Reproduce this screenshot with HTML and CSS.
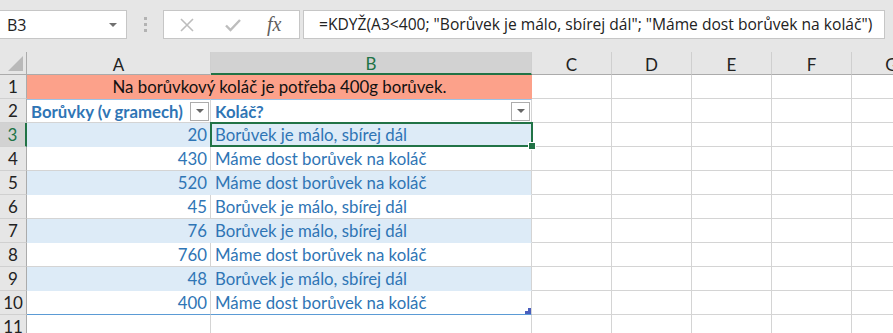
FILE: index.html
```html
<!DOCTYPE html>
<html lang="cs">
<head>
    <meta charset="UTF-8">
    <meta name="viewport" content="width=device-width, initial-scale=1.0">
    <title>Borůvky</title>
    <link rel="stylesheet" href="styles.css">
</head>
<body>
    <div class="lista">
        <div class="nazev">
            <span>B3</span>
            <svg class="sipka" width="10" height="6" viewBox="0 0 10 6"><path d="M1 1h8L5 5z" fill="#707070"/></svg>
        </div>
        <div class="uchyt"><i></i><i></i><i></i></div>
        <div class="tlacitka">
            <svg width="14" height="14" viewBox="0 0 14 14"><path d="M1 1L13 13M13 1L1 13" stroke="#bdbdbd" stroke-width="1.6" fill="none"/></svg>
            <svg width="16" height="14" viewBox="0 0 16 14"><path d="M1 7.5L5.5 12L15 2" stroke="#bdbdbd" stroke-width="2.4" fill="none"/></svg>
            <span class="fx">fx</span>
        </div>
        <div class="vzorec">=KDYŽ(A3&lt;400; "Borůvek je málo, sbírej dál"; "Máme dost borůvek na koláč")</div>
    </div>

    <div class="list">
        <div class="roh"><svg width="18" height="18" viewBox="0 0 18 18"><path d="M17 2V17H2z" fill="#b9b9b9"/></svg></div>
        <div class="hlavicka">A</div>
        <div class="hlavicka vybrano">B</div>
        <div class="hlavicka">C</div>
        <div class="hlavicka">D</div>
        <div class="hlavicka">E</div>
        <div class="hlavicka">F</div>
        <div class="hlavicka">G</div>

        <div class="radek">1</div>
        <div class="bunka nadpis"><span>Na borůvkový koláč je potřeba 400g borůvek.</span></div>
        <div class="bunka"></div><div class="bunka"></div><div class="bunka"></div><div class="bunka"></div><div class="bunka"></div>

        <div class="radek">2</div>
        <div class="bunka zahlavi">Borůvky (v gramech)<span class="filtr"></span></div>
        <div class="bunka zahlavi">Koláč?<span class="filtr"></span></div>
        <div class="bunka"></div><div class="bunka"></div><div class="bunka"></div><div class="bunka"></div><div class="bunka"></div>

        <div class="radek vybrano">3</div>
        <div class="bunka cislo pruh">20</div>
        <div class="bunka text pruh aktivni">Borůvek je málo, sbírej dál</div>
        <div class="bunka"></div><div class="bunka"></div><div class="bunka"></div><div class="bunka"></div><div class="bunka"></div>

        <div class="radek">4</div>
        <div class="bunka cislo">430</div>
        <div class="bunka text">Máme dost borůvek na koláč</div>
        <div class="bunka"></div><div class="bunka"></div><div class="bunka"></div><div class="bunka"></div><div class="bunka"></div>

        <div class="radek">5</div>
        <div class="bunka cislo pruh">520</div>
        <div class="bunka text pruh">Máme dost borůvek na koláč</div>
        <div class="bunka"></div><div class="bunka"></div><div class="bunka"></div><div class="bunka"></div><div class="bunka"></div>

        <div class="radek">6</div>
        <div class="bunka cislo">45</div>
        <div class="bunka text">Borůvek je málo, sbírej dál</div>
        <div class="bunka"></div><div class="bunka"></div><div class="bunka"></div><div class="bunka"></div><div class="bunka"></div>

        <div class="radek">7</div>
        <div class="bunka cislo pruh">76</div>
        <div class="bunka text pruh">Borůvek je málo, sbírej dál</div>
        <div class="bunka"></div><div class="bunka"></div><div class="bunka"></div><div class="bunka"></div><div class="bunka"></div>

        <div class="radek">8</div>
        <div class="bunka cislo">760</div>
        <div class="bunka text">Máme dost borůvek na koláč</div>
        <div class="bunka"></div><div class="bunka"></div><div class="bunka"></div><div class="bunka"></div><div class="bunka"></div>

        <div class="radek">9</div>
        <div class="bunka cislo pruh">48</div>
        <div class="bunka text pruh">Borůvek je málo, sbírej dál</div>
        <div class="bunka"></div><div class="bunka"></div><div class="bunka"></div><div class="bunka"></div><div class="bunka"></div>

        <div class="radek">10</div>
        <div class="bunka cislo konec">400</div>
        <div class="bunka text konec posledni">Máme dost borůvek na koláč</div>
        <div class="bunka"></div><div class="bunka"></div><div class="bunka"></div><div class="bunka"></div><div class="bunka"></div>

        <div class="radek">11</div>
        <div class="bunka"></div><div class="bunka"></div><div class="bunka"></div><div class="bunka"></div><div class="bunka"></div><div class="bunka"></div><div class="bunka"></div>
    </div>
</body>
</html>
```

FILE: styles.css
```css
body {
    margin: 0;
    width: 893px;
    height: 333px;
    overflow: hidden;
    background: #fff;
    font-family: Lato, "Liberation Sans", sans-serif;
}

.lista {
    display: flex;
    align-items: center;
    height: 52px;
    padding-bottom: 3px;
    box-sizing: border-box;
    background: #e6e6e6;
}

.nazev {
    display: flex;
    align-items: center;
    justify-content: space-between;
    width: 127px;
    height: 29px;
    box-sizing: border-box;
    padding: 0 8px 0 7px;
    background: #fff;
    border: 1px solid #c6c6c6;
    border-left: none;
    font-family: "Open Sans", sans-serif;
    font-size: 16px;
    color: #222;
}

.uchyt {
    display: flex;
    flex-direction: column;
    gap: 3px;
    margin: 0 16px 0 17px;
}

.uchyt i {
    width: 3px;
    height: 3px;
    background: #b3b3b3;
}

.tlacitka {
    display: flex;
    align-items: center;
    width: 137px;
    height: 29px;
    box-sizing: border-box;
    padding-left: 16px;
    background: #fff;
    border: 1px solid #c6c6c6;
}

.tlacitka svg:nth-child(2) {
    margin-left: 31px;
}

.fx {
    margin-left: 26px;
    font-family: "Liberation Serif", serif;
    font-style: italic;
    font-size: 20px;
    color: #5f5f5f;
}

.vzorec {
    width: 582px;
    height: 29px;
    box-sizing: border-box;
    margin-left: 3px;
    padding-left: 15px;
    line-height: 27px;
    background: #fff;
    border: 1px solid #c6c6c6;
    font-family: "Open Sans", sans-serif;
    font-size: 15.6px;
    color: #222;
    white-space: nowrap;
}

.list {
    display: grid;
    grid-template-columns: 27px 184px 321px 80px 80px 80px 80px 80px;
    grid-template-rows: 23px repeat(11, 24px);
    overflow: hidden;
    font-size: 16.8px;
}

.roh {
    display: flex;
    align-items: flex-end;
    justify-content: flex-end;
    background: #e6e6e6;
    border-right: 1px solid #ababab;
    border-bottom: 1px solid #ababab;
    padding: 0 2px 2px 0;
}

.hlavicka {
    display: flex;
    align-items: center;
    justify-content: center;
    background: #e6e6e6;
    border-right: 1px solid #cfcfcf;
    border-bottom: 1px solid #ababab;
    color: #222;
    font-size: 17px;
    padding-top: 2px;
}

.hlavicka.vybrano {
    background: #d2d2d2;
    color: #217346;
    border-bottom: 2px solid #217346;
}

.radek {
    display: flex;
    align-items: center;
    justify-content: center;
    background: #e6e6e6;
    border-right: 1px solid #ababab;
    border-bottom: 1px solid #d0d0d0;
    color: #222;
    font-size: 17px;
}

.radek.vybrano {
    background: #d2d2d2;
    color: #217346;
    border-right: 2px solid #217346;
}

.bunka {
    display: flex;
    align-items: flex-end;
    padding: 0 3px 1px 4px;
    border-right: 1px solid #d4d4d4;
    border-bottom: 1px solid #d4d4d4;
    white-space: nowrap;
    position: relative;
}

.nadpis {
    grid-column: span 2;
    justify-content: center;
    background: #fca18a;
    border-color: #fca18a;
    color: #111;
}

.zahlavi {
    justify-content: space-between;
    align-items: center;
    font-weight: bold;
    color: #2f75b5;
    border-top: 1px solid #9bc2e6;
    padding: 0 1px 0 4px;
}

.filtr {
    width: 19px;
    height: 19px;
    box-sizing: border-box;
    background: #fff;
    border: 1px solid #acacac;
    display: flex;
    align-items: center;
    justify-content: center;
}

.filtr::after {
    content: "";
    border-left: 4px solid transparent;
    border-right: 4px solid transparent;
    border-top: 4px solid #666;
}

.cislo {
    justify-content: flex-end;
    color: #2f75b5;
}

.text {
    color: #2f75b5;
}

.pruh {
    background: #ddebf7;
    border-bottom-color: #ddebf7;
}

.cislo.pruh {
    border-right-color: #ddebf7;
}

.konec {
    border-bottom: 1px solid #5b9bd5;
}

.aktivni::after {
    content: "";
    position: absolute;
    top: -1px;
    left: -1px;
    right: -2px;
    bottom: -1px;
    border: 2px solid #217346;
}

.aktivni::before {
    content: "";
    position: absolute;
    right: -5px;
    bottom: -4px;
    width: 6px;
    height: 6px;
    background: #217346;
    border: 1px solid #fff;
    z-index: 2;
}

.posledni::after {
    content: "";
    position: absolute;
    right: 0;
    bottom: 0;
    width: 6px;
    height: 6px;
    background: linear-gradient(#4a5ebd, #4a5ebd) right top / 3px 3px no-repeat,
                linear-gradient(#4a5ebd, #4a5ebd) left bottom / 6px 3px no-repeat;
}
```
